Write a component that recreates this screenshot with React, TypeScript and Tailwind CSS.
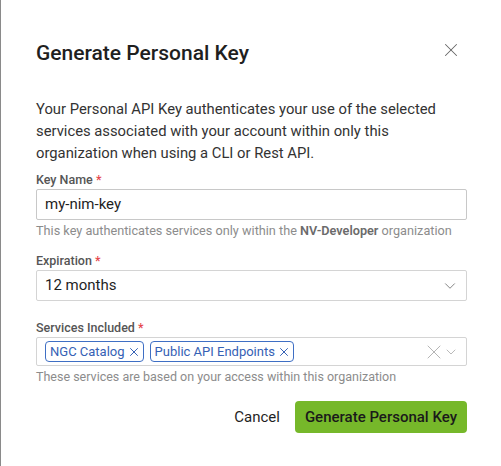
import { X, ChevronDown } from 'lucide-react';

function Label({ text }: { text: string }) {
  return (
    <label className="block text-[12.5px] font-medium text-[#555] mb-[1px] leading-[16px]">
      {text} <span className="text-[#e5484d]">*</span>
    </label>
  );
}

function Chip({ text }: { text: string }) {
  return (
    <span className="flex items-center gap-[2px] h-[21px] pl-[4px] pr-[2px] border border-[#3f6fc4] rounded-[4px] text-[13px] text-[#3561b5] leading-none">
      {text}
      <X className="w-[14px] h-[14px] text-[#3561b5]" strokeWidth={1.7} />
    </span>
  );
}

export default function App() {
  return (
    <div className="w-[501px] h-[466px] bg-white border-l border-[#8a8a8a] font-['Roboto','Noto_Sans',sans-serif] text-[#222] overflow-hidden">
      <div className="pl-[35px] pr-[34px] pt-[40px]">
        <div className="flex items-center justify-between">
          <h2 className="text-[21px] font-medium text-[#1f1f1f] leading-[26px]">Generate Personal Key</h2>
          <X className="w-[22px] h-[22px] text-[#666] mr-[5px] -mt-[6px]" strokeWidth={1.1} />
        </div>

        <p className="mt-[32px] text-[14.8px] leading-[22px] text-[#333] whitespace-nowrap">
          Your Personal API Key authenticates your use of the selected
          <br />
          services associated with your account within only this
          <br />
          organization when using a CLI or Rest API.
        </p>

        <div className="mt-[8px]">
          <Label text="Key Name" />
          <div className="h-[31px] border border-[#c8c8c8] rounded-[2px] flex items-center px-[8px] text-[15px] text-[#1f1f1f]">
            my-nim-key
          </div>
          <p className="mt-[3px] text-[12.7px] text-[#8c8c8c] leading-[16px] whitespace-nowrap">
            This key authenticates services only within the <span className="font-semibold text-[#6b6b6b]">NV-Developer</span> organization
          </p>
        </div>

        <div className="mt-[14px]">
          <Label text="Expiration" />
          <div className="h-[31px] border border-[#d4d4d4] rounded-[2px] flex items-center justify-between pl-[8px] pr-[7px] text-[15px] text-[#1f1f1f]">
            12 months
            <ChevronDown className="w-[18px] h-[18px] text-[#777]" strokeWidth={1.2} />
          </div>
        </div>

        <div className="mt-[19px]">
          <Label text="Services Included" />
          <div className="h-[29px] border border-[#d4d4d4] rounded-[2px] flex items-center justify-between pl-[8px] pr-[7px]">
            <div className="flex items-center gap-[6px]">
              <Chip text="NGC Catalog" />
              <Chip text="Public API Endpoints" />
            </div>
            <div className="flex items-center">
              <X className="w-[24px] h-[24px] text-[#b5b5b5] -mr-[3px]" strokeWidth={1} />
              <ChevronDown className="w-[16px] h-[16px] text-[#b5b5b5]" strokeWidth={1.4} />
            </div>
          </div>
          <p className="mt-[3px] text-[12.5px] text-[#8c8c8c] leading-[16px]">
            These services are based on your access within this organization
          </p>
        </div>

        <div className="mt-[16px] flex items-center justify-end gap-[15px]">
          <button className="text-[15px] text-[#1f1f1f]">Cancel</button>
          <button className="h-[32px] px-[10px] bg-[#76b82a] rounded-[4px] text-[15px] font-medium text-[#1a1a1a]">
            Generate Personal Key
          </button>
        </div>
      </div>
    </div>
  );
}
